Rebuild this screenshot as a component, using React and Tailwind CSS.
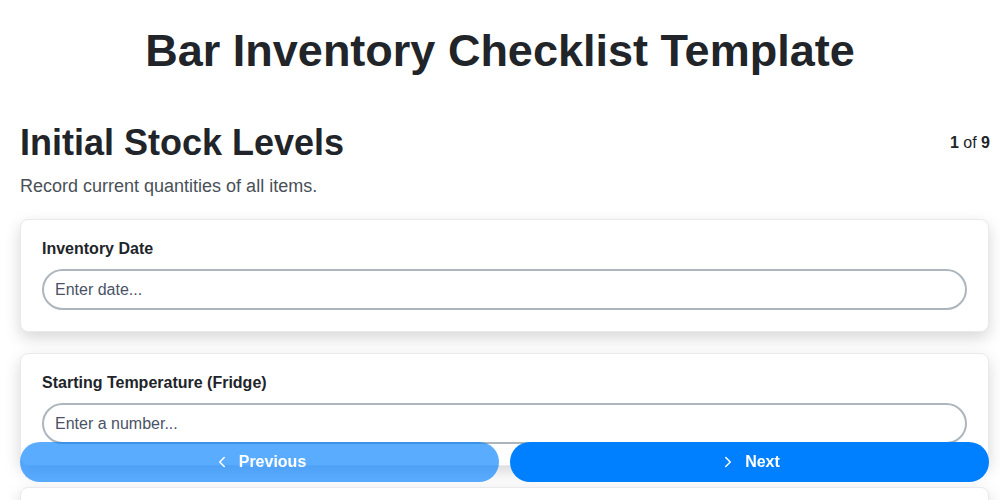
import { ChevronLeft, ChevronRight } from "lucide-react";

const fields = [
  { label: "Inventory Date", placeholder: "Enter date..." },
  { label: "Starting Temperature (Fridge)", placeholder: "Enter a number..." },
];

export default function App() {
  return (
    <div className="min-h-screen bg-white text-[#212529] font-['Liberation_Sans',Arial,sans-serif]">
      <h1 className="pt-[24px] text-center text-[45px] font-bold leading-[54px]">Bar Inventory Checklist Template</h1>

      <div className="pl-5 pr-[11px] pt-[43px] pb-24">
        <div className="flex items-center justify-between">
          <h2 className="text-[36px] font-bold leading-[43px]">Initial Stock Levels</h2>
          <div className="-mr-px text-[16px]">
            <span className="font-bold">1</span> of <span className="font-bold">9</span>
          </div>
        </div>
        <p className="mt-[10px] text-[18px] leading-[24px] text-[#495057]">Record current quantities of all items.</p>

        <div className="mt-[21px] flex flex-col gap-[21px]">
          {fields.map((f) => (
            <div key={f.label} className="rounded-lg border border-[#e9e9ee] bg-white px-[21px] pt-[20px] pb-[21px] shadow-[0_6px_16px_rgba(0,0,0,0.16)]">
              <label className="block text-[16px] font-bold leading-[18px]">{f.label}</label>
              <input
                className="mt-[11px] block h-[41px] w-full rounded-full border-2 border-[#adb5bd] bg-white px-[11px] text-[16px] text-[#212529] outline-none placeholder:text-[#4a5366]"
                placeholder={f.placeholder}
              />
            </div>
          ))}
          <div className="h-[112px] rounded-lg border border-[#e9e9ee] bg-white shadow-[0_6px_16px_rgba(0,0,0,0.16)]" />
        </div>
      </div>

      <div className="fixed bottom-[18px] left-5 right-[11px] flex gap-[11px]">
        <button className="flex h-[40px] flex-1 items-center justify-center gap-[8px] rounded-full bg-[#0080ff]/65 text-[16px] font-bold text-white">
          <ChevronLeft className="h-[18px] w-[18px]" strokeWidth={2} />
          Previous
        </button>
        <button className="flex h-[40px] flex-1 items-center justify-center gap-[8px] rounded-full bg-[#0080ff] text-[16px] font-bold text-white">
          <ChevronRight className="h-[18px] w-[18px]" strokeWidth={2} />
          Next
        </button>
      </div>
    </div>
  );
}
